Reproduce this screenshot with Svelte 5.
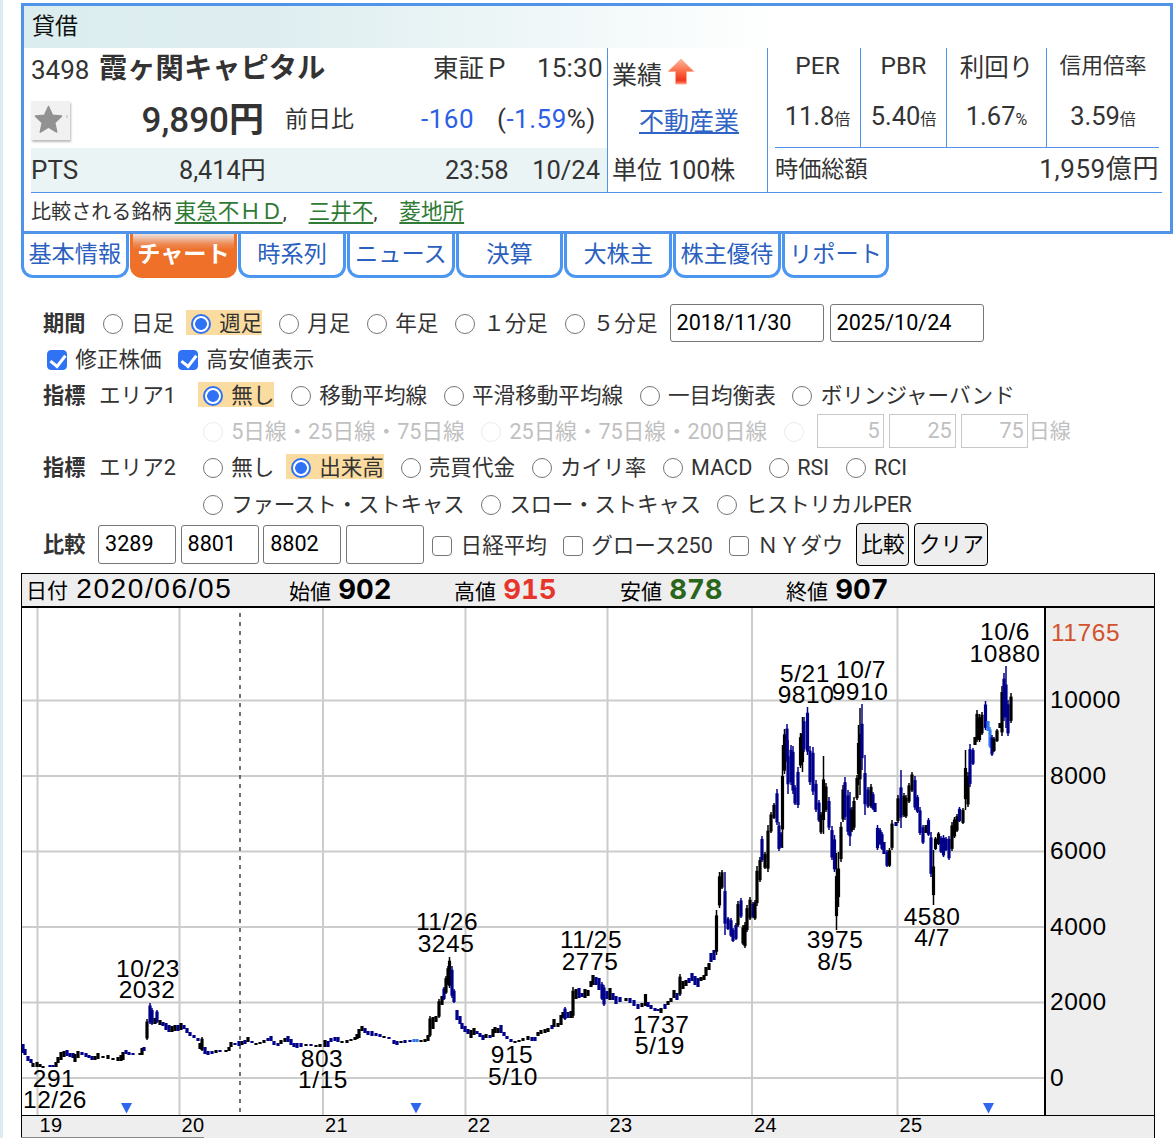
<script>
	const tabs = ['基本情報', 'チャート', '時系列', 'ニュース', '決算', '大株主', '株主優待', 'リポート'];
	const activeTab = 'チャート';

	const ratios = [
		{ name: 'PER', value: '11.8', unit: '倍' },
		{ name: 'PBR', value: '5.40', unit: '倍' },
		{ name: '利回り', value: '1.67', unit: '%' },
		{ name: '信用倍率', value: '3.59', unit: '倍' }
	];

	const periods = ['日足', '週足', '月足', '年足', '１分足', '５分足'];
	const area1 = ['無し', '移動平均線', '平滑移動平均線', '一目均衡表', 'ボリンジャーバンド'];
	const area2 = ['無し', '出来高', '売買代金', 'カイリ率', 'MACD', 'RSI', 'RCI'];
	const area2more = ['ファースト・ストキャス', 'スロー・ストキャス', 'ヒストリカルPER'];
	const averages = ['5日線・25日線・75日線', '25日線・75日線・200日線'];

	let period = '週足';
	let line = '無し';
	let sub = '出来高';
	let from = '2018/11/30';
	let to = '2025/10/24';
	let codes = ['3289', '8801', '8802', ''];
	let compare = { nikkei: false, growth: false, dow: false };

	function clear() {
		codes = ['', '', '', ''];
	}

	const years = [
		[37.5, '19'], [179.5, '20'], [323, '21'], [465.5, '22'], [607.5, '23'], [752, '24'], [897.5, '25']
	];
	const levels = [
		[700.5, '10000'], [776, '8000'], [851.5, '6000'], [927, '4000'], [1002.5, '2000'], [1078, '0']
	];
	const notes = [
		[148, 977, '10/23'], [147, 998, '2032'],
		[54, 1087, '291'], [55, 1108, '12/26'],
		[322, 1067, '803'], [323, 1088, '1/15'],
		[447, 930, '11/26'], [446, 952, '3245'],
		[512, 1063, '915'], [513, 1085, '5/10'],
		[591, 948, '11/25'], [590, 970, '2775'],
		[661, 1033, '1737'], [660, 1054, '5/19'],
		[805, 682, '5/21'], [806, 703, '9810'],
		[861, 678, '10/7'], [860, 700, '9910'],
		[835, 948, '3975'], [835, 970, '8/5'],
		[932, 925, '4580'], [932, 946, '4/7'],
		[1005, 640, '10/6'], [1005, 662, '10880']
	];
	const markers = [126.5, 416, 988.5];

	// x, high, low, colour (k: up, b: down, l: current)
	const raw = `23 1044 1053 b,25 1049 1055 b,28 1056 1061 b,31 1059 1063 b,33 1063 1067 k,37 1062 1067 k,40 1064 1067 k,43 1066 1068 k,50 1065 1067 b,53 1065 1067 b,
56 1062 1067 k,58 1057 1063 k,61 1052 1060 k,64 1051 1057 k,67 1050 1056 b,70 1053 1057 b,73 1053 1058 b,75 1054 1062 k,78 1051 1058 k,82 1052 1055 b,86 1053 1057 b,89 1055 1058 b,
92 1056 1060 b,95 1056 1060 k,98 1053 1059 k,103 1056 1058 k,108 1055 1059 k,113 1058 1060 k,118 1057 1061 k,121 1055 1061 k,123 1052 1060 k,126 1050 1054 b,129 1052 1055 b,133 1053 1055 b,
140 1053 1055 k,142 1048 1055 k,144 1047 1051 b,147 1019 1040 k,150 1003 1024 b,152 1008 1025 b,155 1018 1024 k,157 1010 1023 b,160 1020 1025 k,163 1022 1026 b,166 1023 1030 b,169 1025 1032 b,
172 1026 1032 k,175 1025 1031 k,178 1025 1031 b,181 1023 1030 k,184 1025 1029 b,187 1028 1033 b,190 1032 1036 b,194 1035 1038 b,198 1038 1041 b,200 1043 1049 k,202 1037 1051 k,205 1047 1054 b,208 1051 1055 b,
212 1051 1054 b,216 1050 1053 k,220 1050 1052 b,226 1050 1052 k,229 1047 1051 k,231 1042 1047 k,235 1043 1045 b,239 1041 1046 b,242 1041 1045 k,245 1040 1044 b,248 1037 1042 k,252 1041 1043 b,256 1043 1045 k,260 1042 1044 k,
264 1040 1043 k,268 1038 1041 b,271 1036 1041 b,274 1041 1045 b,278 1043 1046 b,281 1040 1044 k,285 1038 1042 k,288 1036 1042 b,291 1039 1045 b,294 1043 1047 b,297 1043 1048 b,301 1043 1047 b,306 1044 1046 k,311 1044 1046 b,
316 1045 1047 k,320 1044 1047 k,325 1040 1047 k,328 1041 1047 b,331 1038 1042 b,335 1037 1041 b,338 1037 1042 b,342 1041 1043 k,347 1040 1043 k,351 1039 1041 k,355 1037 1040 k,357 1034 1039 k,359 1029 1038 k,362 1026 1031 k,
365 1028 1033 b,368 1031 1035 b,372 1031 1036 b,376 1033 1036 b,380 1034 1037 b,384 1036 1038 k,389 1037 1039 b,394 1040 1044 b,397 1041 1045 b,401 1041 1043 k,405 1040 1043 b,410 1040 1042 b,414 1039 1042 l,417 1039 1042 l,
421 1040 1042 k,425 1039 1042 k,428 1035 1041 k,430 1016 1037 k,433 1017 1029 k,436 1016 1022 k,439 999 1018 k,442 996 1005 k,444 987 1000 b,446 976 994 k,448 966 985 k,449.5 957 988 k,452 966 998 b,454 989 1003 b,457 1010 1020 b,
460 1016 1024 b,462 1023 1029 b,465 1026 1032 b,468 1029 1034 b,471 1030 1038 k,474 1028 1035 k,477 1031 1034 b,480 1033 1037 b,483 1035 1040 b,486 1034 1038 k,490 1035 1038 b,493 1029 1037 k,495 1027 1033 k,498 1028 1033 k,501 1025 1033 b,
504 1032 1036 b,507 1036 1039 b,511 1039 1042 b,515 1041 1043 k,519 1040 1042 k,523 1038 1041 k,528 1036 1040 k,532 1037 1041 b,535 1037 1041 b,538 1032 1036 k,541 1030 1034 k,545 1029 1033 k,548 1028 1032 k,552 1025 1029 b,554 1019 1027 k,
558 1023 1027 k,561 1015 1025 k,563 1012 1018 k,565 1007 1020 b,568 1012 1018 b,571 1011 1018 k,573 987 1018 k,576 989 999 k,579 988 998 b,582 993 997 b,585 989 998 k,588 990 996 k,591 981 987 k,593 975 985 k,596 977 985 b,599 978 990 b,
602 982 1000 b,604 985 1006 b,607 991 999 b,610 988 1000 k,613 993 1000 b,616 996 1004 b,620 997 1002 b,626 998 1001 k,630 998 1003 b,634 1000 1006 b,638 1004 1009 b,642 1003 1007 k,645.5 994 1006 k,648 1002 1007 b,651 1005 1009 b,655 1008 1011 b,
658 1009 1011 b,661 1008 1013 k,665 1004 1009 b,668 1001 1005 k,671 998 1002 k,674 990 998 k,677 993 1000 b,680 974 996 k,683 981 989 k,686 980 986 k,689 978 983 b,692 973 981 b,695 976 985 b,698 978 987 b,701 977 981 k,704 975 980 k,706 967 976 k,
709 963 970 k,711 953 962 b,714 950 960 b,716.5 910 955 k,719.5 872 908 k,722 870 889 k,725 872 935 b,728 917 930 b,731 918 937 b,733 928 942 b,736 923 940 b,738 901 927 k,741 898 918 b,743 925 945 k,745 922 948 k,747 905 932 k,750 897 920 k,
753 902 918 b,755 900 920 k,757 866 906 k,760 857 882 k,762 836 862 b,765 852 869 k,768 825 872 k,771 812 833 k,774 803 819 k,777 789 825 b,779 822 851 b,781 832 848 b,782.5 745 848 k,784.5 729 774 k,787 724 762 b,788 740 794 b,791 745 785 b,
793 746 794 b,795 785 805 b,798 767 808 b,800.5 733 768 k,802.5 717 772 k,804 717 752 b,807.5 707 755 b,810 746 785 b,813 747 795 b,816 780 812 b,819 800 822 b,821 812 834 k,823.5 756 834 k,826 783 812 k,829 797 830 b,832 826 860 b,
834.5 835 872 b,836.5 853 930 k,838.5 852 907 k,841 822 862 k,843 785 822 k,845 777 820 b,848 790 835 b,850 792 846 b,852 807 832 k,854 797 830 k,857 775 800 k,858.5 725 785 k,860 708 795 k,862 704 770 b,865 755 815 b,868 787 808 b,871 784 808 k,
873 792 810 b,875 803 812 b,877.5 825 850 b,880 828 845 b,882 832 850 b,884 842 854 b,887 850 867 b,889.5 848 867 k,892 820 850 k,896 822 826 b,898 795 823 k,901 770 828 b,904 793 817 k,906 795 818 k,909 783 803 k,912 772 792 k,915 776 810 b,
917.5 795 813 b,920 807 835 b,923 825 844 b,926 825 833 k,928.5 818 836 b,931 832 877 b,933.5 850 905 k,935.5 837 850 k,938.5 832 845 k,941 836 853 b,943.5 835 857 b,946 837 851 b,949 836 860 b,952 822 851 k,954.5 817 838 k,957 814 832 k,
959.5 807 822 b,963 808 824 k,965.5 750 810 k,968 772 807 k,970 744 787 b,973 748 765 b,975 737 745 k,977 710 742 k,979.5 714 742 k,982 712 735 k,985.5 701 730 b,988 721 731 l,990 727 748 l,992 735 756 b,994 737 752 k,997 729 742 k,1000 723 728 k,
1002 686 736 k,1004 673 721 b,1006 666 728 b,1008 700 736 b,1011 693 723 k`;

	const colours = { k: '#000', b: '#00008b', l: '#2f7bf0' };
	const candles = raw.split(',').map((row) => {
		const [x, high, low, c] = row.trim().split(' ');
		const range = low - high;
		// long weeks get a visible wick, the rest are plain bars
		const wick = range > 50 ? range * 0.3 : range > 12 ? range * 0.12 : 0;
		return { x: +x, high: +high, low: +low, top: +high + wick, bottom: +low - wick * 0.6, fill: colours[c] };
	});
</script>

<div class="page">
	<section class="quote">
		<div class="band">貸借</div>
		<div class="info">
			<div class="price">
				<div class="line name">
					<span>3498</span>
					<strong>霞ヶ関キャピタル</strong>
					<span class="market">東証Ｐ</span>
					<span class="end">15:30</span>
				</div>
				<div class="line now">
					<button class="star" aria-label="お気に入り">
						<svg width="39" height="39" viewBox="0 0 39 39">
							<path d="M17.500 5.500l4 8.800 9 .8-6.800 6.600 2 9.300-8.200-4.800-8.200 4.800 2-9.300-6.800-6.600 9-.8z" fill="#929292" stroke="#929292" stroke-width="1.500" stroke-linejoin="round" />
							<path d="M36 14v3" stroke="#bbb" />
						</svg>
					</button>
					<span class="yen">9,890<b>円</b></span>
					<span class="prev">前日比</span>
					<span class="diff blue">-160</span>
					<span class="rate">(<span class="blue">-1.59</span>%)</span>
				</div>
				<div class="line pts">
					<span>PTS</span>
					<span class="after">8,414円</span>
					<span class="time">23:58</span>
					<span class="end">10/24</span>
				</div>
			</div>
			<div class="sector">
				<div class="result">
					業績
					<svg width="28" height="27" viewBox="0 0 28 27">
						<defs>
							<linearGradient id="up" x1="0" y1="0" x2="0" y2="1">
								<stop offset="0" stop-color="#ffb59c" />
								<stop offset=".5" stop-color="#fa6b45" />
								<stop offset=".85" stop-color="#f0351c" />
								<stop offset="1" stop-color="#ff8a6c" />
							</linearGradient>
						</defs>
						<path d="M14 1L27 13.500H19.500V26H8.500V13.500H1z" fill="url(#up)" stroke="#ffa98f" stroke-width=".8" />
					</svg>
				</div>
				<a href="#sector">不動産業</a>
				<div class="unit">単位 100株</div>
			</div>
			<div class="stats">
				<div class="ratios">
					{#each ratios as r}
						<div>
							<span class="rname">{r.name}</span>
							<span class="rvalue">{r.value}<small>{r.unit}</small></span>
						</div>
					{/each}
				</div>
				<div class="cap"><span>時価総額</span><span class="capvalue">1,959億円</span></div>
			</div>
		</div>
		<div class="peers">
			比較される銘柄 <a href="#8815">東急不ＨＤ</a>, <a href="#8801">三井不</a>, <a href="#8802">菱地所</a>
		</div>
	</section>

	<nav>
		{#each tabs as tab}
			<a href="#tab" class:active={tab === activeTab}>{tab}</a>
		{/each}
	</nav>

	<form>
		<div class="row">
			<b>期間</b>
			{#each periods as p}
				<label class:on={period === p}><input type="radio" bind:group={period} value={p}>{p}</label>
			{/each}
			<input class="date" type="text" bind:value={from}>
			<input class="date" type="text" bind:value={to}>
		</div>
		<div class="row checks">
			<label><input type="checkbox" checked>修正株価</label>
			<label><input type="checkbox" checked>高安値表示</label>
		</div>
		<div class="row">
			<b>指標</b><span class="area">エリア1</span>
			{#each area1 as a}
				<label class:on={line === a}><input type="radio" bind:group={line} value={a}>{a}</label>
			{/each}
		</div>
		<div class="row sub off">
			{#each averages as a}
				<label><input type="radio" disabled>{a}</label>
			{/each}
			<input type="radio" disabled>
			<input class="days first" type="text" value="5" disabled>
			<input class="days" type="text" value="25" disabled>
			<input class="days" type="text" value="75" disabled>
			<span>日線</span>
		</div>
		<div class="row">
			<b>指標</b><span class="area">エリア2</span>
			{#each area2 as a}
				<label class:on={sub === a}><input type="radio" bind:group={sub} value={a}>{a}</label>
			{/each}
		</div>
		<div class="row sub more">
			{#each area2more as a}
				<label><input type="radio" bind:group={sub} value={a}>{a}</label>
			{/each}
		</div>
		<div class="row compare">
			<b>比較</b>
			{#each codes as code}
				<input class="code" type="text" bind:value={code}>
			{/each}
			<label><input type="checkbox" bind:checked={compare.nikkei}>日経平均</label>
			<label><input type="checkbox" bind:checked={compare.growth}>グロース250</label>
			<label><input type="checkbox" bind:checked={compare.dow}>ＮＹダウ</label>
			<button type="button">比較</button>
			<button type="button" class="clear" on:click={clear}>クリア</button>
		</div>
	</form>

	<section class="chart">
		<div class="ohlc">
			<span>日付 <i>2020/06/05</i></span>
			<span>始値 <b>902</b></span>
			<span>高値 <b class="high">915</b></span>
			<span>安値 <b class="low">878</b></span>
			<span>終値 <b>907</b></span>
		</div>
		<svg width="1134" height="530" viewBox="21 608 1134 530">
			<rect x="1045" y="607" width="110" height="508" fill="#eee" />
			<rect x="21" y="1115" width="1134" height="23" fill="#eee" />
			{#each levels as [y]}
				<path d="M22 {y}H1044" stroke="#ccc" stroke-width="2" />
			{/each}
			{#each years as [x]}
				<path d="M{x} 608V1115" stroke="#ccc" stroke-width="2" />
			{/each}
			<path d="M240 613V1114" stroke="#444" stroke-width="1.5" stroke-dasharray="4 5" />

			{#each candles as c}
				<path d="M{c.x} {c.high}V{c.low}" stroke={c.fill} stroke-width="1.5" />
				<path d="M{c.x} {c.top}V{c.bottom}" stroke={c.fill} stroke-width="3.2" />
			{/each}

			{#each notes as [x, y, text]}
				<text class="note" {x} {y}>{text}</text>
			{/each}
			{#each markers as x}
				<path d="M{x - 5.500} 1103H{x + 5.500}L{x} 1113.500z" fill="#2f66ee" />
			{/each}

			<text class="max" x="1051" y="641">11765</text>
			{#each levels as [y, text]}
				<text x="1050" y={y + 7.500}>{text}</text>
			{/each}
			{#each years as [x, text]}
				<text class="year" x={x + 2} y="1132">{text}</text>
			{/each}

			<path d="M1045 607V1115" stroke="#000" stroke-width="2" />
			<path d="M21.500 607V1138M1154.500 607V1138M21 1115.500H1155" stroke="#000" />
			<path d="M21 1137.500H204" stroke="#888" />
		</svg>
	</section>
</div>

<style>
	:global(body) {
		background: #fff;
		overflow: hidden;
	}

	.page {
		box-sizing: border-box;
		width: 1174px;
		height: 1138px;
		padding: 3px 1px 0 18px;
		border-left: 3px solid #dcebee;
		overflow: hidden;
		color: #333;
		font-family: Roboto, 'Noto Sans CJK JP', sans-serif;
		font-size: 21.6px;
	}

	.page * {
		box-sizing: border-box;
	}

	.quote {
		height: 231px;
		border: 3px solid #4f94e8;
	}

	.band {
		height: 42px;
		padding-left: 8px;
		background: linear-gradient(90deg, #dcedf0 0%, #deeef0 22%, #fff 66%);
		color: #111;
		font-size: 23px;
		line-height: 42px;
	}

	.info {
		display: grid;
		grid-template-columns: 577px 160px 1fr;
		height: 145px;
		margin: 0 8px 0 7px;
		border-bottom: 1px solid #4f94e8;
	}

	.price {
		display: grid;
		grid-template-rows: 48px 52px 44px;
		border-right: 1px solid #4f94e8;
	}

	.line {
		display: grid;
		align-items: center;
		font-size: 26px;
		white-space: nowrap;
	}

	.name {
		grid-template-columns: 68px 334px 104px 1fr;
		height: 48px;
		padding-bottom: 4px;
		line-height: 36px;
	}

	.name strong {
		margin-top: -2px;
		font-size: 28.3px;
	}

	.name .market {
		margin-top: -4px;
		font-size: 25.500px;
	}

	.name .end {
		margin-top: -4px;
	}

	.end {
		letter-spacing: 0.2px;
	}

	.now {
		grid-template-columns: 40px 193px 21px 136px 76px 1fr;
		height: 52px;
		padding-bottom: 8px;
		line-height: 36px;
	}

	.star {
		width: 39px;
		height: 39px;
		margin-top: 4px;
		padding: 0;
		border: 0;
		background: #f1f1f1;
		box-shadow: 1px 2px 2px #bbb;
	}

	.yen {
		margin-top: 5px;
		font-size: 35px;
		font-weight: 500;
		text-align: right;
	}

	.prev {
		grid-column: 4;
		margin-top: 4px;
		font-size: 23px;
	}

	.diff,
	.rate {
		margin-top: 2px;
		letter-spacing: 0.5px;
	}

	.blue {
		color: #2c5fe6;
	}

	.pts {
		grid-template-columns: 148px 86px 180px 1fr;
		background: #eaf4f5;
	}

	.after {
		margin-top: -4px;
		font-size: 25.200px;
	}

	.time {
		grid-column: 4;
		justify-self: start;
		font-size: 25.500px;
	}

	.pts .end {
		grid-column: 5;
		justify-self: end;
		padding-right: 7px;
		font-size: 25.500px;
		letter-spacing: 0;
	}

	.sector {
		display: grid;
		grid-template-rows: 50px 46px 48px;
		align-items: center;
		padding-left: 4px;
		border-right: 1px solid #4f94e8;
		font-size: 25px;
	}

	.result {
		display: flex;
		align-items: center;
		gap: 5px;
	}

	.result svg {
		margin-top: -3px;
	}

	.sector a {
		margin: -4px 0 0 27px;
		color: #2f63c5;
	}

	.stats {
		padding: 0 3px 0 7px;
	}

	.ratios {
		display: grid;
		grid-template-columns: 86px 86px 100px 1fr;
		height: 100px;
		border-bottom: 1px solid #4f94e8;
	}

	.ratios div {
		display: grid;
		grid-template-rows: 37px 62px;
		align-items: center;
		justify-items: center;
		border-right: 1px solid #4f94e8;
	}

	.ratios div:last-child {
		border-right: 0;
	}

	.rname {
		margin-top: -2px;
		font-size: 24.500px;
	}

	.ratios div:last-child .rname {
		margin-top: -6px;
		font-size: 21.800px;
	}

	.rvalue {
		margin-top: -1px;
		font-size: 25.500px;
	}

	.rvalue small {
		font-size: 16px;
	}

	.cap {
		display: flex;
		justify-content: space-between;
		height: 44px;
		font-size: 23.200px;
		line-height: 43px;
	}

	.capvalue {
		font-size: 26px;
		letter-spacing: 0.6px;
	}

	.peers {
		padding-left: 7px;
		font-size: 20.100px;
		line-height: 37px;
		white-space: nowrap;
	}

	.peers a {
		margin-left: -2px;
		color: #2f7a35;
		font-size: 21.600px;
		text-underline-offset: 3px;
	}

	.peers a + a {
		margin-left: 17px;
	}

	nav {
		display: flex;
		gap: 1.200px;
		height: 44px;
	}

	nav a {
		width: 107.500px;
		border: 3px solid #4b96f0;
		border-top: 0;
		border-radius: 0 0 12px 12px;
		color: #2b5fc0;
		font-size: 23.200px;
		line-height: 41px;
		text-align: center;
		text-decoration: none;
		white-space: nowrap;
	}

	nav a.active {
		border-color: #ee7029;
		background: linear-gradient(#ece0dc, #ee8a55 10px, #ee7029 16px);
		color: #fff;
		font-weight: bold;
	}

	form {
		padding: 26px 0 0 22px;
		height: 295px;
	}

	.row {
		display: flex;
		align-items: center;
		height: 36.300px;
		white-space: nowrap;
	}

	.row:first-child {
		height: 38px;
	}

	.row b {
		width: 60px;
		flex: none;
		margin-top: -4px;
		font-size: 21.200px;
	}

	.area {
		width: 100px;
		margin: -4px 0 0 -4px;
	}

	.row b + .area + label {
		margin-left: 4px;
	}

	.row b + .area + label.on {
		margin-left: -1px;
	}

	label {
		display: flex;
		align-items: center;
		gap: 8.200px;
		height: 25px;
		margin-right: 16.600px;
		padding-top: 2px;
		line-height: 23px;
	}

	label.on {
		margin-left: -5px;
		padding-left: 5px;
		background: #fbdca0;
	}

	.row label {
		margin-top: -2px;
	}

	input[type='radio'],
	input[type='checkbox'] {
		position: relative;
		flex: none;
		width: 20px;
		height: 20px;
		margin: 1px 0 0;
		border: 1.5px solid #767676;
		border-radius: 50%;
		background: #fff;
		appearance: none;
	}

	input[type='radio']:checked {
		border: 2px solid #2f72f3;
		background: radial-gradient(#2f72f3 0 5.500px, #fff 6.200px);
	}

	input[type='checkbox'] {
		border-radius: 4px;
	}

	input[type='checkbox']:checked {
		border-color: #2f72f3;
		background: #2f72f3;
	}

	input[type='checkbox']:checked::after {
		content: '';
		position: absolute;
		top: 1px;
		left: 5px;
		width: 7px;
		height: 12px;
		border: solid #fff;
		border-width: 0 3px 3px 0;
		transform: rotate(38deg);
	}

	input[type='text'] {
		height: 38px;
		padding: 0 6px 2px;
		border: 1px solid #767676;
		border-radius: 3px;
		background: #fff;
		color: #000;
		font: inherit;
	}

	.date {
		width: 154px;
		margin-right: 6px;
	}

	label + .date {
		margin-left: -4.500px;
	}

	.checks {
		padding-left: 4px;
		height: 35px;
	}

	.sub {
		padding-left: 160px;
	}

	.more {
		letter-spacing: -0.300px;
	}

	.off {
		color: #c0c0c0;
	}

	.off input[type='radio'] {
		border-color: #ececec;
	}

	.off input[type='text'] {
		width: 67px;
		height: 34px;
		margin-right: 5px;
		padding-right: 3px;
		border-color: #c8c8c8;
		border-radius: 0;
		color: #c0c0c0;
		text-align: right;
	}

	.off input.first {
		margin-left: 13px;
	}

	.off span {
		margin: -4px 0 0 -4px;
		font-size: 21px;
	}

	.compare {
		height: 45px;
	}

	.compare b {
		width: 55px;
	}

	.compare input.code {
		width: 78px;
		height: 39px;
		margin-right: 4.600px;
	}

	.compare label {
		margin-top: -1px;
		margin-right: 16px;
	}

	.code + label {
		margin-left: 4px;
	}

	.compare button {
		width: 53px;
		height: 43px;
		margin-left: -3px;
		padding: 0 0 4px;
		border: 1px solid #000;
		border-radius: 4px;
		background: #eee;
		color: #000;
		font: inherit;
	}

	.compare .clear {
		width: 74px;
		margin-left: 5px;
	}

	.chart {
		width: 1134px;
		color: #000;
	}

	.chart svg {
		display: block;
	}

	.ohlc {
		display: grid;
		grid-template-columns: 263px 165px 166px 166px 1fr;
		height: 35px;
		padding-left: 4px;
		border: 1px solid #000;
		border-bottom-width: 2px;
		background: #eee;
		font-size: 21px;
		line-height: 30px;
		white-space: nowrap;
	}

	.ohlc i,
	.ohlc b {
		font-family: Inter, sans-serif;
		font-style: normal;
		font-variant-numeric: tabular-nums;
	}

	.ohlc i {
		margin-left: 3px;
		font-family: 'Liberation Sans', sans-serif;
		font-size: 28px;
		letter-spacing: 1.600px;
	}

	.ohlc b {
		margin-left: 2px;
		font-size: 27.500px;
	}

	.high {
		color: #e8352b;
	}

	.low {
		color: #2a651c;
	}

	text {
		font-family: 'Liberation Sans', sans-serif;
		font-size: 24.500px;
		letter-spacing: 0.550px;
	}

	.note {
		text-anchor: middle;
	}

	.max {
		fill: #d2522d;
	}

	.year {
		font-size: 20px;
		letter-spacing: 0.400px;
	}
</style>
